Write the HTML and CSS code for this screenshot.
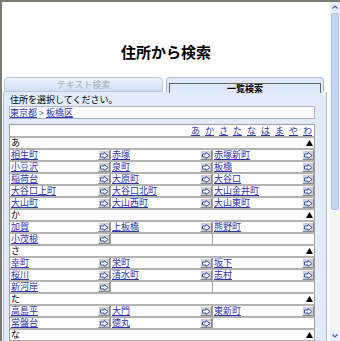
FILE: index.html
```html
<!DOCTYPE html>
<html lang="ja">
<head>
<meta charset="UTF-8" />
<title>住所から検索</title>
<link rel="stylesheet" href="styles.css">
</head>
<body>
<svg class="defs" width="0" height="0">
  <symbol id="arr" viewBox="0 0 9 7">
    <path d="M0.5 2 H4 V0.5 L8 3.5 L4 6.5 V5 H0.5 Z" fill="#fff" stroke="#3d55c4" stroke-width="1" stroke-linejoin="miter"/>
  </symbol>
  <symbol id="up" viewBox="0 0 7 6">
    <path d="M3.5 0 L7 6 H0 Z" fill="#000"/>
  </symbol>
</svg>

<div class="window">
  <div class="page">
    <h1 class="title">住所から検索</h1>

    <div class="tabs">
      <div class="tab">テキスト検索</div>
      <div class="tab active"><span>一覧検索</span></div>
    </div>

    <div class="panel">
      <p class="hint">住所を選択してください。</p>
      <div class="crumbs"><a href="#">東京都</a> <span class="sep">&gt;</span> <a href="#">板橋区</a></div>

      <table class="list">
        <colgroup>
          <col class="n1"><col class="go-col">
          <col class="n2"><col class="go-col">
          <col class="n2"><col class="go-col">
        </colgroup>
        <tr class="kana">
          <td colspan="6"><a href="#">あ</a><a href="#">か</a><a href="#">さ</a><a href="#">た</a><a href="#">な</a><a href="#">は</a><a href="#">ま</a><a href="#">や</a><a href="#">わ</a></td>
        </tr>

        <tr class="head"><td colspan="6"><div class="head-in">あ<svg class="tri"><use href="#up"/></svg></div></td></tr>
        <tr>
          <td class="name"><a href="#">相生町</a></td><td class="go"><span class="btn"><svg><use href="#arr"/></svg></span></td>
          <td class="name"><a href="#">赤塚</a></td><td class="go"><span class="btn"><svg><use href="#arr"/></svg></span></td>
          <td class="name"><a href="#">赤塚新町</a></td><td class="go"><span class="btn"><svg><use href="#arr"/></svg></span></td>
        </tr>
        <tr>
          <td class="name"><a href="#">小豆沢</a></td><td class="go"><span class="btn"><svg><use href="#arr"/></svg></span></td>
          <td class="name"><a href="#">泉町</a></td><td class="go"><span class="btn"><svg><use href="#arr"/></svg></span></td>
          <td class="name"><a href="#">板橋</a></td><td class="go"><span class="btn"><svg><use href="#arr"/></svg></span></td>
        </tr>
        <tr>
          <td class="name"><a href="#">稲荷台</a></td><td class="go"><span class="btn"><svg><use href="#arr"/></svg></span></td>
          <td class="name"><a href="#">大原町</a></td><td class="go"><span class="btn"><svg><use href="#arr"/></svg></span></td>
          <td class="name"><a href="#">大谷口</a></td><td class="go"><span class="btn"><svg><use href="#arr"/></svg></span></td>
        </tr>
        <tr>
          <td class="name"><a href="#">大谷口上町</a></td><td class="go"><span class="btn"><svg><use href="#arr"/></svg></span></td>
          <td class="name"><a href="#">大谷口北町</a></td><td class="go"><span class="btn"><svg><use href="#arr"/></svg></span></td>
          <td class="name"><a href="#">大山金井町</a></td><td class="go"><span class="btn"><svg><use href="#arr"/></svg></span></td>
        </tr>
        <tr>
          <td class="name"><a href="#">大山町</a></td><td class="go"><span class="btn"><svg><use href="#arr"/></svg></span></td>
          <td class="name"><a href="#">大山西町</a></td><td class="go"><span class="btn"><svg><use href="#arr"/></svg></span></td>
          <td class="name"><a href="#">大山東町</a></td><td class="go"><span class="btn"><svg><use href="#arr"/></svg></span></td>
        </tr>

        <tr class="head"><td colspan="6"><div class="head-in">か<svg class="tri"><use href="#up"/></svg></div></td></tr>
        <tr>
          <td class="name"><a href="#">加賀</a></td><td class="go"><span class="btn"><svg><use href="#arr"/></svg></span></td>
          <td class="name"><a href="#">上板橋</a></td><td class="go"><span class="btn"><svg><use href="#arr"/></svg></span></td>
          <td class="name"><a href="#">熊野町</a></td><td class="go"><span class="btn"><svg><use href="#arr"/></svg></span></td>
        </tr>
        <tr>
          <td class="name"><a href="#">小茂根</a></td><td class="go"><span class="btn"><svg><use href="#arr"/></svg></span></td>
          <td class="empty" colspan="2"></td>
          <td class="empty" colspan="2"></td>
        </tr>

        <tr class="head"><td colspan="6"><div class="head-in">さ<svg class="tri"><use href="#up"/></svg></div></td></tr>
        <tr>
          <td class="name"><a href="#">幸町</a></td><td class="go"><span class="btn"><svg><use href="#arr"/></svg></span></td>
          <td class="name"><a href="#">栄町</a></td><td class="go"><span class="btn"><svg><use href="#arr"/></svg></span></td>
          <td class="name"><a href="#">坂下</a></td><td class="go"><span class="btn"><svg><use href="#arr"/></svg></span></td>
        </tr>
        <tr>
          <td class="name"><a href="#">桜川</a></td><td class="go"><span class="btn"><svg><use href="#arr"/></svg></span></td>
          <td class="name"><a href="#">清水町</a></td><td class="go"><span class="btn"><svg><use href="#arr"/></svg></span></td>
          <td class="name"><a href="#">志村</a></td><td class="go"><span class="btn"><svg><use href="#arr"/></svg></span></td>
        </tr>
        <tr>
          <td class="name"><a href="#">新河岸</a></td><td class="go"><span class="btn"><svg><use href="#arr"/></svg></span></td>
          <td class="empty" colspan="2"></td>
          <td class="empty" colspan="2"></td>
        </tr>

        <tr class="head"><td colspan="6"><div class="head-in">た<svg class="tri"><use href="#up"/></svg></div></td></tr>
        <tr>
          <td class="name"><a href="#">高島平</a></td><td class="go"><span class="btn"><svg><use href="#arr"/></svg></span></td>
          <td class="name"><a href="#">大門</a></td><td class="go"><span class="btn"><svg><use href="#arr"/></svg></span></td>
          <td class="name"><a href="#">東新町</a></td><td class="go"><span class="btn"><svg><use href="#arr"/></svg></span></td>
        </tr>
        <tr>
          <td class="name"><a href="#">常盤台</a></td><td class="go"><span class="btn"><svg><use href="#arr"/></svg></span></td>
          <td class="name"><a href="#">徳丸</a></td><td class="go"><span class="btn"><svg><use href="#arr"/></svg></span></td>
          <td class="empty" colspan="2"></td>
        </tr>

        <tr class="head"><td colspan="6"><div class="head-in">な<svg class="tri"><use href="#up"/></svg></div></td></tr>
      </table>
    </div>
  </div>

  <div class="scrollbar">
    <div class="sb-btn"><svg width="6" height="4" viewBox="0 0 6 4"><path d="M0.5 3.5 L3 1 L5.5 3.5" fill="none" stroke="#4d6185" stroke-width="1.2"/></svg></div>
    <div class="sb-thumb"></div>
    <div class="sb-track"></div>
    <div class="sb-btn"><svg width="6" height="4" viewBox="0 0 6 4"><path d="M0.5 0.5 L3 3 L5.5 0.5" fill="none" stroke="#4d6185" stroke-width="1.2"/></svg></div>
  </div>
</div>
</body>
</html>
```

FILE: styles.css
```css
body {
  margin: 0;
  background: #fff;
  font-family: "Noto Sans CJK JP", "Noto Sans", sans-serif;
  color: #000;
}
.defs {
  position: absolute;
  width: 0;
  height: 0;
}
.window {
  width: 338px;
  height: 339px;
  border-top: 2px solid #7b7a72;
  border-left: 2px solid #7b7a72;
  display: flex;
  overflow: hidden;
}
.page {
  width: 328px;
  overflow: hidden;
}
.title {
  margin: 0;
  padding-top: 39px;
  font-size: 15px;
  line-height: 22px;
  font-weight: bold;
  text-align: center;
}

/* tabs */
.tabs {
  display: flex;
  gap: 3px;
  margin: 14px 0 0 2px;
  height: 15px;
}
.tab {
  box-sizing: border-box;
  width: 159px;
  height: 15px;
  background: linear-gradient(#eef4fd, #cfdff6);
  border: 1px solid #b4c8e6;
  border-radius: 4px 4px 0 0;
  color: #a3adc0;
  font-size: 9px;
  line-height: 13px;
  text-align: center;
}
.tab.active {
  width: 158px;
  background: #dfe8f8;
  border-color: #a6bce0;
  border-bottom: none;
  color: #000;
  font-weight: bold;
  padding: 5px 2px 0 2px;
}
.tab.active span {
  display: block;
  height: 9px;
  border: 1px solid #666;
  border-bottom: none;
  line-height: 9px;
}

/* panel */
.panel {
  box-sizing: border-box;
  margin-left: 1px;
  width: 324px;
  height: 260px;
  background: #e4ebf8;
  border: 1px solid #a9bcd9;
  border-top: none;
  padding: 2px 11px 0 5px;
  overflow: hidden;
}
.hint {
  margin: 0;
  padding-left: 1px;
  font-size: 9px;
  line-height: 12px;
}
.crumbs {
  height: 11px;
  background: #fff;
  border: 1px solid #a9b3c6;
  font-size: 9px;
  line-height: 11px;
}
.crumbs .sep {
  color: #666;
}
a {
  color: #2f35b2;
}

/* list table */
.list {
  margin-top: 5px;
  width: 306px;
  table-layout: fixed;
  border-collapse: separate;
  border-spacing: 0;
  border-left: 1px solid #9c9c9c;
  border-top: 1px solid #9c9c9c;
}
.n1 { width: 88px; }
.n2 { width: 89px; }
.go-col { width: 13px; }
.list td {
  padding: 0;
  height: 10px;
  line-height: 10px;
  font-size: 9px;
  background: #fff;
  border-bottom: 2px solid #b3b3b3;
  white-space: nowrap;
}
.list .name {
  padding-left: 1px;
}
.list .go,
.list .empty {
  border-right: 1px solid #a0a0a0;
}
.btn {
  box-sizing: border-box;
  display: flex;
  align-items: center;
  justify-content: center;
  width: 12px;
  height: 10px;
  background: #d3d1cb;
  border: 1px solid;
  border-color: #fafafa #888 #888 #fafafa;
}
.btn svg {
  width: 9px;
  height: 7px;
}
.kana td {
  height: 11px;
  line-height: 11px;
  text-align: right;
  padding-right: 2px;
  border-right: 1px solid #a0a0a0;
}
.kana a {
  margin-left: 5px;
}
.head td {
  border-right: 1px solid #a0a0a0;
}
.head-in {
  display: flex;
  justify-content: space-between;
  align-items: center;
  padding: 0 1px 0 1px;
  height: 10px;
}
.tri {
  width: 7px;
  height: 6px;
}

/* scrollbar */
.scrollbar {
  width: 10px;
  height: 339px;
  display: flex;
  flex-direction: column;
  background: #f4f4f0;
}
.sb-btn {
  height: 10px;
  display: flex;
  align-items: center;
  justify-content: center;
  background: #e6eefc;
}
.sb-thumb {
  box-sizing: border-box;
  margin: 1px 1px 0 1px;
  height: 197px;
  background: #c5d6f7;
  border: 1px solid #a9bee9;
  border-radius: 2px;
}
.sb-track {
  flex: 1;
}
```
